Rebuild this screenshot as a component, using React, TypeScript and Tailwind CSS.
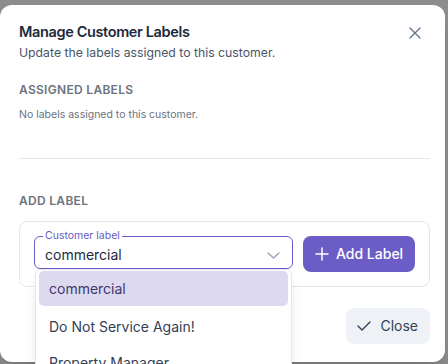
import React from 'react';

const options = ['commercial', 'Do Not Service Again!', 'Property Manager'];

const App: React.FC = () => {
    return (
        <div
            className="h-[364px] w-[448px] overflow-hidden bg-[#8d8d8d]"
            style={{ fontFamily: 'Inter, "Noto Sans", sans-serif' }}
        >
            {/* Dialog */}
            <div className="relative mt-[5px] h-[357px] w-[445px] rounded-xl bg-white pl-[19px] pr-[15px] pt-[15px] pb-[17px] shadow-xl">
                <button className="absolute right-[24px] top-[22px] text-[#64748b]">
                    <svg width="12" height="12" viewBox="0 0 12 12" fill="none" stroke="currentColor" strokeWidth="1.4" strokeLinecap="round">
                        <path d="M1 1L11 11M11 1L1 11" />
                    </svg>
                </button>

                {/* Header */}
                <h2 className="text-[14.5px] leading-6 font-semibold tracking-[-0.025em] text-[#1e293b]">Manage Customer Labels</h2>
                <p className="text-[12.25px] leading-[18px] text-[#475569]">Update the labels assigned to this customer.</p>

                {/* Assigned labels */}
                <h3 className="mt-5 text-xs leading-4 font-semibold uppercase tracking-wide text-[#6b7280]">Assigned Labels</h3>
                <p className="mt-[10px] text-[10.5px] leading-[14px] text-[#6b7280]">No labels assigned to this customer.</p>

                <div className="mt-[36px] h-px bg-[#e2e8f0]" />

                {/* Add label */}
                <h3 className="mt-[34px] text-xs leading-4 font-semibold uppercase tracking-wide text-[#6b7280]">Add Label</h3>
                <div className="mt-3 flex items-start gap-[10px] rounded-lg border border-[#e2e8f0] p-[14px]">
                    <div className="relative w-[259px]">
                        <div className="flex h-[33px] items-center justify-between rounded-md border border-[#6b5bc6] pl-[10px] pr-[12px] pt-[5px]">
                            <span className="text-sm text-[#1e293b]">commercial</span>
                            <svg width="13" height="7" viewBox="0 0 13 7" fill="none" stroke="#94a3b8" strokeWidth="1.3" strokeLinecap="round" strokeLinejoin="round">
                                <path d="M1 1L6.5 6L12 1" />
                            </svg>
                        </div>
                        <span className="absolute left-[9px] top-[-7px] bg-white px-[2px] text-[10.5px] leading-[14px] text-[#6b5bc6]">
                            Customer label
                        </span>

                        {/* Dropdown menu */}
                        <div className="absolute left-px right-px top-[33px] z-10 rounded-md border border-[#e2e8f0] bg-white px-[3px] py-px shadow-lg">
                            {options.map((o, i) => (
                                <div
                                    key={o}
                                    className={`flex items-center rounded-[5px] pl-[10px] text-sm ${i === 0 ? 'h-[35px] bg-[#ddd9ef] text-[#41376f]' : 'h-[36px] pt-[5px] text-[#334155]'}`}
                                >
                                    {o}
                                </div>
                            ))}
                        </div>
                    </div>
                    <button className="flex h-9 w-[112px] items-center gap-[7px] rounded-lg bg-[#6c5dc6] pl-3 text-sm font-medium text-white">
                        <svg width="14" height="14" viewBox="0 0 14 14" fill="none" stroke="currentColor" strokeWidth="1.5" strokeLinecap="round">
                            <path d="M7 1V13M1 7H13" />
                        </svg>
                        Add Label
                    </button>
                </div>

                {/* Footer */}
                <div className="mt-[21px] flex justify-end">
                    <button className="flex h-9 items-center gap-[9px] rounded-lg bg-[#eef2f7] pl-[11px] pr-3 text-sm text-[#334155]">
                        <svg width="14" height="10" viewBox="0 0 14 10" fill="none" stroke="currentColor" strokeWidth="1.4" strokeLinecap="round" strokeLinejoin="round">
                            <path d="M1 5L5 9L13 1" />
                        </svg>
                        Close
                    </button>
                </div>
            </div>
        </div>
    );
};

export default App;
